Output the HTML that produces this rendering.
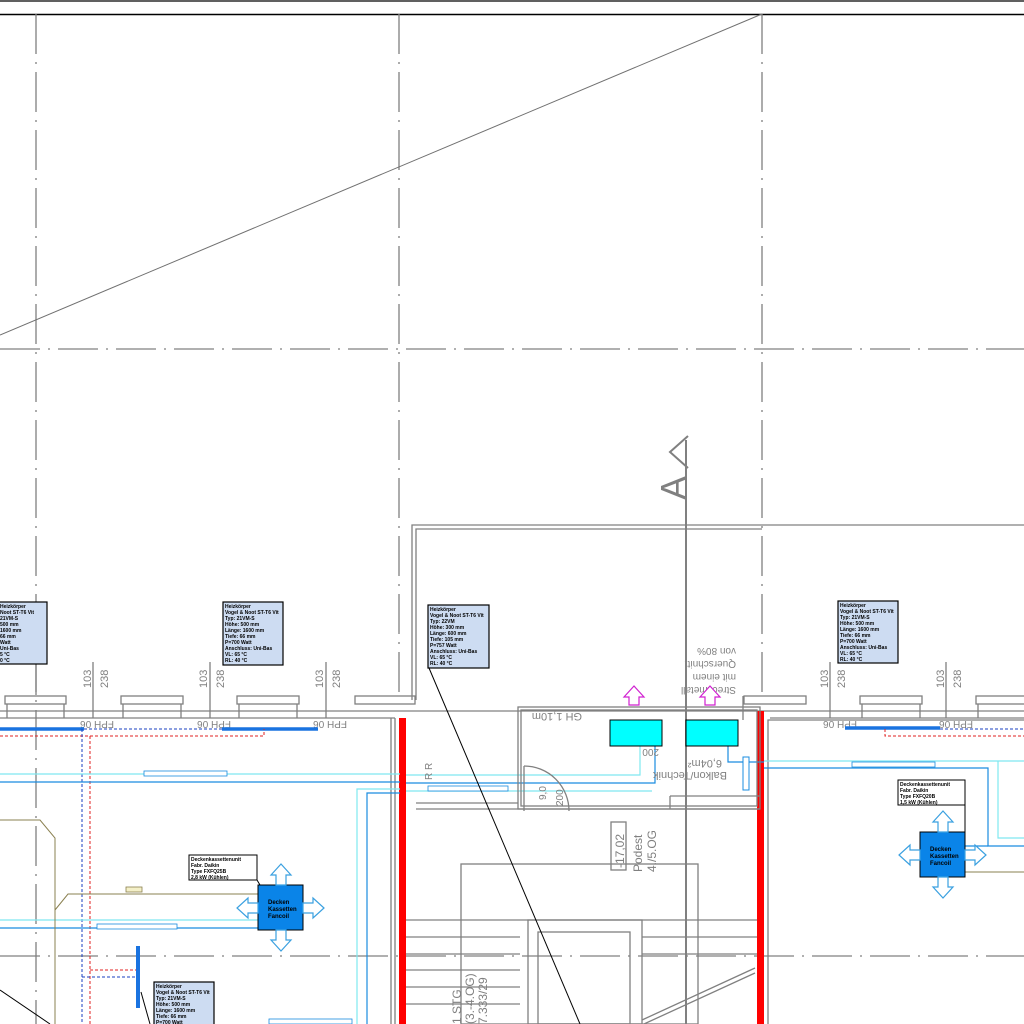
<!DOCTYPE html>
<html><head><meta charset="utf-8"><style>
html,body{margin:0;padding:0;background:#fff;width:1024px;height:1024px;overflow:hidden}
svg{display:block}
text{font-family:"Liberation Sans",sans-serif}
.m{font-family:"Liberation Mono",monospace}
.g{stroke:#808080;fill:none;stroke-width:1.3}
.dd{stroke:#808080;fill:none;stroke-width:1.3;stroke-dasharray:40 8 2 8}
.ib{fill:#cddcf2;stroke:#000;stroke-width:1.2}
.it{font-size:5px;font-weight:bold;fill:#000}
.dim{font-size:11px;fill:#808080;font-family:"Liberation Mono",monospace}
.cy{stroke:#7fe8f0;fill:none;stroke-width:1.2}
.bl{stroke:#1a8ce0;fill:none;stroke-width:1.2}
.arr{fill:#fff;stroke:#3aa0e0;stroke-width:1.2}
</style></head><body>
<svg width="1024" height="1024" viewBox="0 0 1024 1024" xmlns="http://www.w3.org/2000/svg">
<rect width="1024" height="1024" fill="#fff"/>
<line x1="0" y1="1" x2="1024" y2="1" stroke="#000" stroke-width="1.2"/>
<line x1="0" y1="14.5" x2="1024" y2="14.5" stroke="#000" stroke-width="1.5"/>
<line class="dd" x1="36" y1="14" x2="36" y2="1024"/>
<line class="dd" x1="399" y1="14" x2="399" y2="700"/>
<line class="dd" x1="762" y1="14" x2="762" y2="700"/>
<line class="dd" x1="0" y1="349" x2="1024" y2="349"/>
<line class="dd" x1="0" y1="956" x2="1024" y2="956"/>
<line x1="0" y1="335" x2="762" y2="14" stroke="#707070" stroke-width="1"/>
<line x1="686" y1="440" x2="686" y2="1024" stroke="#808080" stroke-width="2"/>
<polyline points="688,436 670,452 688,468" fill="none" stroke="#808080" stroke-width="2"/>
<text x="0" y="0" transform="translate(686,500) rotate(-90)" font-size="36" fill="#808080">A</text>
<polyline class="g" points="412,700 412,525 1024,525"/>
<polyline class="g" points="416,700 416,529 762,529"/>
<line class="g" x1="0" y1="711" x2="1024" y2="711"/>
<line class="g" x1="0" y1="718" x2="395" y2="718"/>
<line class="g" x1="770" y1="718" x2="1024" y2="718"/>
<g class="g">
<rect x="5" y="696" width="61" height="8"/><rect x="121" y="696" width="62" height="8"/><rect x="237" y="696" width="62" height="8"/><rect x="355" y="696" width="60" height="8"/>
<rect x="744" y="696" width="62" height="8"/><rect x="860" y="696" width="62" height="8"/><rect x="976" y="696" width="60" height="8"/>
<line x1="7" y1="704" x2="7" y2="718"/><line x1="64" y1="704" x2="64" y2="718"/>
<line x1="123" y1="704" x2="123" y2="718"/><line x1="181" y1="704" x2="181" y2="718"/>
<line x1="239" y1="704" x2="239" y2="718"/><line x1="297" y1="704" x2="297" y2="718"/>
<line x1="862" y1="704" x2="862" y2="718"/><line x1="920" y1="704" x2="920" y2="718"/>
<line x1="978" y1="704" x2="978" y2="718"/>
<polyline points="395,1024 395,718"/><polyline points="391,1024 391,718"/>
<polyline points="743,720 743,696"/><polyline points="768,1024 768,720 1024,720"/>
</g>
<g class="g"><line x1="93" y1="662" x2="93" y2="718"/><line x1="210" y1="662" x2="210" y2="718"/><line x1="326" y1="662" x2="326" y2="718"/><line x1="830" y1="662" x2="830" y2="718"/><line x1="946" y1="662" x2="946" y2="718"/><line x1="36" y1="664" x2="36" y2="695"/></g>
<g class="dim">
<text transform="translate(91,688) rotate(-90)">103</text><text transform="translate(108,688) rotate(-90)">238</text>
<text transform="translate(207,688) rotate(-90)">103</text><text transform="translate(224,688) rotate(-90)">238</text>
<text transform="translate(323,688) rotate(-90)">103</text><text transform="translate(340,688) rotate(-90)">238</text>
<text transform="translate(828,688) rotate(-90)">103</text><text transform="translate(845,688) rotate(-90)">238</text>
<text transform="translate(944,688) rotate(-90)">103</text><text transform="translate(961,688) rotate(-90)">238</text>
</g>
<g font-size="10" fill="#808080" class="m">
<text transform="translate(114,721) rotate(180)">FPH 06</text>
<text transform="translate(231,721) rotate(180)">FPH 06</text>
<text transform="translate(347,721) rotate(180)">FPH 06</text>
<text transform="translate(857,721) rotate(180)">FPH 06</text>
<text transform="translate(973,721) rotate(180)">FPH 06</text>
</g>
<line x1="0" y1="729" x2="84" y2="729" stroke="#1a73e0" stroke-width="3.5"/>
<line x1="222" y1="729" x2="318" y2="729" stroke="#1a73e0" stroke-width="3.5"/>
<line x1="845" y1="728" x2="940" y2="728" stroke="#1a73e0" stroke-width="3.5"/>
<line x1="84" y1="729" x2="222" y2="729" stroke="#1a3fc0" stroke-dasharray="3 2"/>
<line x1="940" y1="729" x2="1024" y2="729" stroke="#1a3fc0" stroke-dasharray="3 2"/>
<polyline points="0,736 90,736 90,1024" fill="none" stroke="#e02020" stroke-dasharray="3 2"/>
<polyline points="90,736 264,736 264,729" fill="none" stroke="#e02020" stroke-dasharray="3 2"/>
<polyline points="885,729 885,736 1024,736" fill="none" stroke="#e02020" stroke-dasharray="3 2"/>
<line x1="82" y1="729" x2="82" y2="1024" stroke="#1a3fc0" stroke-dasharray="3 2"/>
<polyline points="90,970 138,970" fill="none" stroke="#e02020" stroke-dasharray="3 2"/>
<polyline points="82,977 138,977" fill="none" stroke="#1a3fc0" stroke-dasharray="3 2"/>
<line x1="138" y1="946" x2="138" y2="1008" stroke="#1a73e0" stroke-width="4"/>
<rect x="399" y="718" width="7" height="306" fill="#f00"/>
<rect x="757" y="711" width="7" height="313" fill="#f00"/>
<polyline class="cy" points="0,774 400,774"/>
<polyline class="bl" points="0,782 400,782"/>
<polyline class="cy" points="406,775 640,775 640,745"/>
<polyline class="bl" points="406,783 655,783 655,745"/>
<polyline class="cy" points="406,791 652,791"/>
<polyline class="cy" points="357,1024 357,789 400,789"/>
<polyline class="bl" points="367,1024 367,793 400,793"/>
<polyline class="cy" points="0,920 258,920"/><polyline class="bl" points="0,928 258,928"/>
<polyline class="cy" points="764,761 1024,761"/>
<polyline class="bl" points="764,768 988,768 988,846 1024,846"/>
<polyline class="cy" points="998,761 998,838 1024,838"/>
<polyline class="bl" points="965,846 988,846"/>
<polyline class="bl" points="728,745 728,762 764,762"/>
<rect x="743" y="757" width="6" height="33" fill="#fff" stroke="#1a8ce0"/>
<polyline points="0,820 40,820 55,838 55,1024" fill="none" stroke="#8a8050"/>
<polyline points="55,910 68,894 258,894" fill="none" stroke="#8a8050"/>
<polyline points="965,872 1024,872" fill="none" stroke="#8a8050"/>
<rect x="126" y="887" width="16" height="5" fill="#f4f0c8" stroke="#8a8050" stroke-width="0.8"/>
<g fill="#fff" stroke="#1a8ce0" stroke-width="0.8">
<rect x="144" y="771" width="83" height="5"/><rect x="428" y="786" width="80" height="5"/>
<rect x="97" y="924" width="80" height="5"/><rect x="852" y="762" width="83" height="5"/>
<rect x="269" y="1019" width="83" height="5"/>
</g>
<g class="g">
<rect x="518" y="707" width="242" height="102"/><rect x="521" y="710" width="236" height="96"/>
<line x1="416" y1="809" x2="760" y2="809"/><line x1="416" y1="803" x2="518" y2="803"/>
<line x1="670" y1="796" x2="760" y2="796"/><line x1="670" y1="796" x2="670" y2="809"/>
<rect x="461" y="864" width="237" height="160"/>
<line x1="406" y1="920" x2="757" y2="920"/><line x1="406" y1="937" x2="520" y2="937"/><line x1="406" y1="954" x2="520" y2="954"/><line x1="406" y1="970" x2="520" y2="970"/><line x1="406" y1="987" x2="520" y2="987"/><line x1="406" y1="1004" x2="520" y2="1004"/>
<rect x="528" y="920" width="114" height="104"/><rect x="538" y="932" width="92" height="92"/>
<line x1="642" y1="937" x2="757" y2="937"/><line x1="642" y1="954" x2="757" y2="954"/>
<line x1="642" y1="1020" x2="755" y2="968"/><line x1="644" y1="1024" x2="755" y2="973"/>
<rect x="611" y="822" width="15" height="48"/>
</g>
<path d="M524,766 A45,45 0 0 1 569,811" class="g"/>
<line x1="524" y1="766" x2="524" y2="811" class="g"/>
<g fill="#808080" font-size="11" class="m">
<text transform="translate(582,713) rotate(180)">GH 1,10m</text>
<text transform="translate(736,687) rotate(180)" font-size="10">Streckmetall</text>
<text transform="translate(736,674) rotate(180)" font-size="10">mit einem</text>
<text transform="translate(736,661) rotate(180)" font-size="10">Querschnitt</text>
<text transform="translate(736,648) rotate(180)" font-size="10">von 80%</text>
<text transform="translate(722,760) rotate(180)">6,04m²</text>
<text transform="translate(727,772) rotate(180)">Balkon/Technik</text>
<text transform="translate(659,749) rotate(180)" font-size="10">200</text>
<text transform="translate(432,780) rotate(-90)" font-size="10">R R</text>
<text transform="translate(546,800) rotate(-90)" font-size="10">9,0</text>
<text transform="translate(563,806) rotate(-90)" font-size="10">200</text>
<text transform="translate(624,868) rotate(-90)" font-size="12">-17,02</text>
<text transform="translate(642,872) rotate(-90)" font-size="12">Podest</text>
<text transform="translate(656,872) rotate(-90)" font-size="12">4./5.OG</text>
<text transform="translate(461,1024) rotate(-90)" font-size="12">1 STG</text>
<text transform="translate(474,1024) rotate(-90)" font-size="12">(3.-4.OG)</text>
<text transform="translate(487,1024) rotate(-90)" font-size="12">7.333/29</text>
</g>
<rect x="610" y="720" width="52" height="26" fill="#00ffff" stroke="#000"/>
<rect x="686" y="720" width="52" height="26" fill="#00ffff" stroke="#000"/>
<g fill="#fff" stroke="#d020d0" stroke-width="1.2">
<path d="M629,705 v-8 h-5 l10,-11 l10,11 h-5 v8 z"/>
<path d="M705,705 v-8 h-5 l10,-11 l10,11 h-5 v8 z"/>
</g>
<line x1="429" y1="668" x2="580" y2="1024" stroke="#000"/>
<line x1="0" y1="990" x2="50" y2="1024" stroke="#000"/>
<line x1="141" y1="992" x2="150" y2="1024" stroke="#000"/>
<g>
<rect class="ib" x="-10" y="602" width="57" height="62"/>
<rect class="ib" x="223" y="602" width="60" height="63"/>
<rect class="ib" x="428" y="605" width="61" height="63"/>
<rect class="ib" x="838" y="601" width="60" height="62"/>
<rect class="ib" x="154" y="982" width="60" height="50"/>
</g>
<g class="it">
<text x="225" y="608">Heizkörper</text><text x="225" y="614">Vogel &amp; Noot ST-T6 Vit</text><text x="225" y="620">Typ: 21VM-S</text><text x="225" y="626">Höhe: 500 mm</text><text x="225" y="632">Länge: 1600 mm</text><text x="225" y="638">Tiefe: 66 mm</text><text x="225" y="644">P=700 Watt</text><text x="225" y="650">Anschluss: Uni-Bas</text><text x="225" y="656">VL: 65 °C</text><text x="225" y="662">RL: 40 °C</text>
<text x="430" y="611">Heizkörper</text><text x="430" y="617">Vogel &amp; Noot ST-T6 Vit</text><text x="430" y="623">Typ: 22VM</text><text x="430" y="629">Höhe: 300 mm</text><text x="430" y="635">Länge: 600 mm</text><text x="430" y="641">Tiefe: 105 mm</text><text x="430" y="647">P=757 Watt</text><text x="430" y="653">Anschluss: Uni-Bas</text><text x="430" y="659">VL: 65 °C</text><text x="430" y="665">RL: 40 °C</text>
<text x="840" y="607">Heizkörper</text><text x="840" y="613">Vogel &amp; Noot ST-T6 Vit</text><text x="840" y="619">Typ: 21VM-S</text><text x="840" y="625">Höhe: 500 mm</text><text x="840" y="631">Länge: 1600 mm</text><text x="840" y="637">Tiefe: 66 mm</text><text x="840" y="643">P=700 Watt</text><text x="840" y="649">Anschluss: Uni-Bas</text><text x="840" y="655">VL: 65 °C</text><text x="840" y="661">RL: 40 °C</text>
<text x="0" y="608">Heizkörper</text><text x="0" y="614">Noot ST-T6 Vit</text><text x="0" y="620">21VM-S</text><text x="0" y="626">500 mm</text><text x="0" y="632">1600 mm</text><text x="0" y="638">66 mm</text><text x="0" y="644">Watt</text><text x="0" y="650">Uni-Bas</text><text x="0" y="656">5 °C</text><text x="0" y="662">0 °C</text>
<text x="156" y="988">Heizkörper</text><text x="156" y="994">Vogel &amp; Noot ST-T6 Vit</text><text x="156" y="1000">Typ: 21VM-S</text><text x="156" y="1006">Höhe: 500 mm</text><text x="156" y="1012">Länge: 1600 mm</text><text x="156" y="1018">Tiefe: 66 mm</text><text x="156" y="1024">P=700 Watt</text>
</g>
<rect x="189" y="855" width="68" height="25" fill="#fff" stroke="#000"/>
<g class="it"><text x="191" y="861">Deckenkassettenunit</text><text x="191" y="867">Fabr. Daikin</text><text x="191" y="873">Type FXFQ25B</text><text x="191" y="879">2,8 kW (Kühlen)</text></g>
<rect x="898" y="780" width="67" height="25" fill="#fff" stroke="#000"/>
<g class="it"><text x="900" y="786">Deckenkassettenunit</text><text x="900" y="792">Fabr. Daikin</text><text x="900" y="798">Type FXFQ20B</text><text x="900" y="804">1,5 kW (Kühlen)</text></g>
<line x1="257" y1="880" x2="260" y2="885" stroke="#000"/>
<line x1="965" y1="805" x2="965" y2="832" stroke="#000"/>
<g>
<rect x="258" y="885" width="45" height="45" fill="#0a84e8" stroke="#000"/>
<g fill="#000" font-size="6" font-weight="bold"><text x="268" y="904">Decken</text><text x="268" y="911">Kassetten</text><text x="268" y="918">Fancoil</text></g>
<path class="arr" d="M276,885 v-10 h-5 l10,-11 l10,11 h-5 v10 z"/>
<path class="arr" d="M276,930 v10 h-5 l10,11 l10,-11 h-5 v-10 z"/>
<path class="arr" d="M258,903 h-10 v-5 l-11,10 l11,10 v-5 h10 z"/>
<path class="arr" d="M303,903 h10 v-5 l11,10 l-11,10 v-5 h-10 z"/>
<rect x="920" y="832" width="45" height="45" fill="#0a84e8" stroke="#000"/>
<g fill="#000" font-size="6" font-weight="bold"><text x="930" y="851">Decken</text><text x="930" y="858">Kassetten</text><text x="930" y="865">Fancoil</text></g>
<path class="arr" d="M938,832 v-10 h-5 l10,-11 l10,11 h-5 v10 z"/>
<path class="arr" d="M938,877 v10 h-5 l10,11 l10,-11 h-5 v-10 z"/>
<path class="arr" d="M920,850 h-10 v-5 l-11,10 l11,10 v-5 h10 z"/>
<path class="arr" d="M965,850 h10 v-5 l11,10 l-11,10 v-5 h-10 z"/>
</g>
</svg>
</body></html>
